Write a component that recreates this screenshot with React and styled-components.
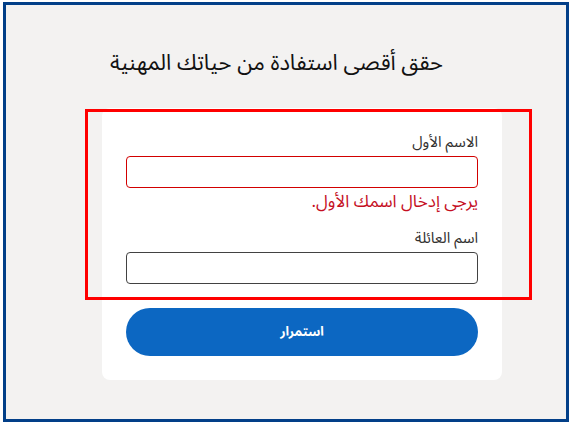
import styled, { createGlobalStyle } from 'styled-components';

const GlobalStyle = createGlobalStyle`
  html, body {
    margin: 0;
    padding: 0;
    background: #ffffff;
  }
  body {
    font-family: "Noto Sans Arabic", "DejaVu Sans", sans-serif;
  }
`;

const Frame = styled.div`
  position: relative;
  margin: 2px 3px;
  width: 560px;
  height: 414px;
  border: 3px solid #023f88;
  background: #f3f2f1;
  direction: rtl;
`;

const Heading = styled.h1`
  box-sizing: border-box;
  margin: 0;
  padding: 36px 123px 0 0;
  height: 103px;
  font-size: 22px;
  line-height: 44px;
  font-weight: normal;
  color: #111111;
  text-align: right;
  white-space: nowrap;
`;

const Card = styled.form`
  margin: 0 64px 0 0;
  width: 352px;
  padding: 24px;
  background: #ffffff;
  border-radius: 8px;
  display: flex;
  flex-direction: column;
`;

const Field = styled.div`
  display: flex;
  flex-direction: column;
`;

const Label = styled.label`
  font-size: 15px;
  line-height: 20px;
  color: #323130;
  margin-bottom: 4px;
`;

const Input = styled.input`
  box-sizing: border-box;
  width: 100%;
  height: 32px;
  border: 1px solid ${({ $error }) => ($error ? '#d20000' : '#424242')};
  border-radius: 4px;
  background: #ffffff;
  outline: none;
`;

const ErrorText = styled.div`
  margin-top: 2px;
  margin-bottom: 14px;
  font-size: 17px;
  line-height: 24px;
  color: #c50f1f;
`;

const Button = styled.button`
  margin-top: 24px;
  height: 48px;
  border: none;
  border-radius: 24px;
  background: #0c67c2;
  color: #ffffff;
  font-family: inherit;
  font-size: 13px;
  font-weight: bold;
`;

// annotation box drawn over the form
const Highlight = styled.div`
  position: absolute;
  left: 79px;
  top: 104px;
  width: 441px;
  height: 185px;
  border: 3px solid #ff0000;
  pointer-events: none;
`;

export default function App() {
  return (
    <>
      <GlobalStyle />
      <Frame>
        <Heading>حقق أقصى استفادة من حياتك المهنية</Heading>
        <Card>
          <Field>
            <Label>الاسم الأول</Label>
            <Input $error />
            <ErrorText>يرجى إدخال اسمك الأول.</ErrorText>
          </Field>
          <Field>
            <Label>اسم العائلة</Label>
            <Input />
          </Field>
          <Button type="button">استمرار</Button>
        </Card>
        <Highlight />
      </Frame>
    </>
  );
}
